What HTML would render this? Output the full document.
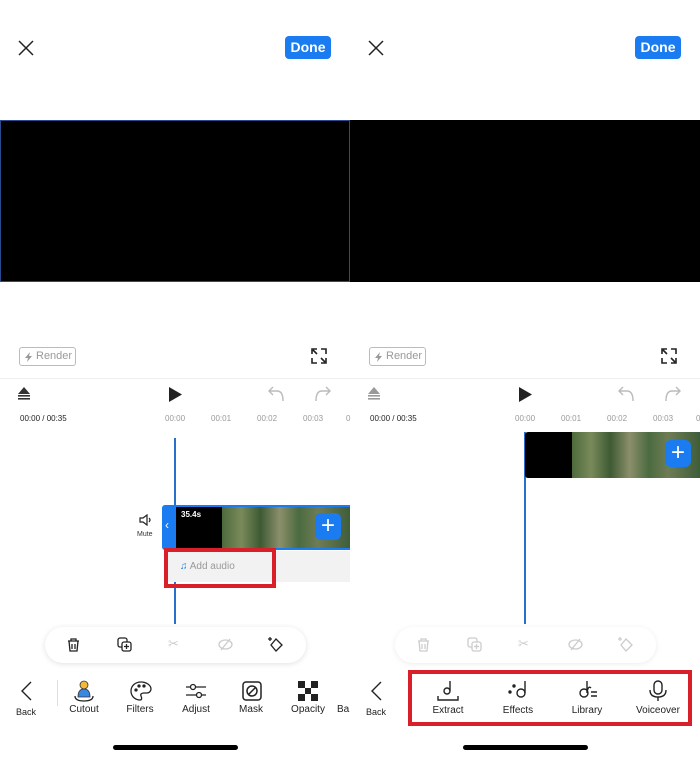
<!DOCTYPE html><html><head><style>
*{margin:0;padding:0;box-sizing:border-box}
body{width:700px;height:757px;background:#fff;font-family:"Liberation Sans",sans-serif;position:relative;overflow:hidden}
.a{position:absolute}
.t{font-size:8px;color:#999}
.lbl{font-size:10px;color:#222;text-align:center;width:70px}
.frames{background:linear-gradient(90deg,#4d6a3c,#7a8a5a 15%,#3e5a34 30%,#8b8f6a 45%,#4b6b40 60%,#6f7c55 75%,#3f5d3a)}
.rb{width:57px;height:19px;border:1px solid #bbb;border-radius:3px;font-size:11px;color:#999;line-height:17px;white-space:nowrap;padding-left:16px}
.rb svg{position:absolute;left:5px;top:4px}
</style></head><body>

<!-- LEFT PANEL -->
<svg class="a" style="left:18px;top:40px" width="16" height="16"><path d="M1 1L15 15M15 1L1 15" stroke="#222" stroke-width="1.5"/></svg>
<div class="a" style="left:285px;top:36px;width:46px;height:23px;background:#1a7cf0;border-radius:4px;color:#fff;font-weight:bold;font-size:14px;text-align:center;line-height:23px">Done</div>
<div class="a" style="left:0;top:120px;width:350px;height:162px;background:#000;border:1px solid #2a4a90"></div>
<div class="a rb" style="left:19px;top:347px"><svg width="7" height="10"><path d="M5 0L0 6H3L2 10L7 4H4Z" fill="#999"/></svg>Render</div>
<svg class="a" style="left:311px;top:348px" width="16" height="16" fill="none" stroke="#222" stroke-width="1.6"><path d="M1 6V1H6M10 1H15V6M15 10V15H10M6 15H1V10M2 2L6 6M14 14L10 10"/></svg>
<div class="a" style="left:0;top:378px;width:350px;height:1px;background:#eee"></div>
<svg class="a" style="left:17px;top:386px" width="14" height="14"><path d="M7 1L13 8H1Z" fill="#333"/><rect x="1" y="9" width="12" height="1.6" fill="#333"/><rect x="1" y="12" width="12" height="1.6" fill="#333"/></svg>
<svg class="a" style="left:169px;top:387px" width="13" height="15"><path d="M0 0L13 7.5L0 15Z" fill="#222"/></svg>
<svg class="a" style="left:268px;top:386px" width="16" height="16" fill="none" stroke="#bbb" stroke-width="1.4"><path d="M5 1L1 5L5 9M1 5H9Q15 5 15 15"/></svg>
<svg class="a" style="left:315px;top:386px" width="16" height="16" fill="none" stroke="#bbb" stroke-width="1.4"><path d="M11 1L15 5L11 9M15 5H7Q1 5 1 15"/></svg>
<div class="a" style="left:20px;top:414px;font-size:8px;color:#222">00:00 / 00:35</div>
<div class="a t" style="left:165px;top:414px">00:00</div><div class="a t" style="left:211px;top:414px">00:01</div><div class="a t" style="left:257px;top:414px">00:02</div><div class="a t" style="left:303px;top:414px">00:03</div><div class="a t" style="left:346px;top:414px">0</div>
<div class="a" style="left:174px;top:438px;width:2px;height:186px;background:#2a6fc9"></div>
<svg class="a" style="left:139px;top:514px" width="14" height="12" fill="none" stroke="#222" stroke-width="1.2"><path d="M1 4H4L8 1V11L4 8H1Z M10 4Q12 6 10 8"/></svg>
<div class="a" style="left:137px;top:531px;font-size:7px;color:#333">Mute</div>
<div class="a" style="left:162px;top:505px;width:188px;height:45px;background:#1a7cf0;border-radius:3px 0 0 3px"></div>
<div class="a" style="left:165px;top:518px;color:#fff;font-size:12px">‹</div>
<div class="a" style="left:176px;top:507px;width:46px;height:41px;background:#000;color:#fff;font-size:8px;font-weight:bold;padding:3px 5px">35.4s</div>
<div class="a frames" style="left:222px;top:507px;width:128px;height:41px"></div>
<div class="a" style="left:315px;top:513px;width:26px;height:27px;background:#1a7cf0;border-radius:6px;color:#fff;font-size:24px;text-align:center;line-height:26px">+</div>
<div class="a" style="left:168px;top:551px;width:182px;height:31px;background:#f2f2f2"></div>
<div class="a" style="left:180px;top:561px;font-size:10px;color:#999"><span style="color:#1a7cf0">♫</span> Add audio</div>
<div class="a" style="left:164px;top:548px;width:112px;height:40px;border:4px solid #d9202a"></div>
<div class="a" style="left:45px;top:627px;width:261px;height:36px;background:#fff;border-radius:18px;box-shadow:0 1px 6px rgba(0,0,0,.12)"></div>
<svg class="a" style="left:67px;top:638px" width="13" height="14" fill="none" stroke="#222" stroke-width="1.3"><path d="M1 3H12M4 3V1H9V3M2 3L3 13H10L11 3M5 6V11M8 6V11"/></svg>
<svg class="a" style="left:117px;top:637px" width="15" height="15" fill="none" stroke="#222" stroke-width="1.3"><rect x="1" y="1" width="9" height="9" rx="2"/><rect x="5" y="5" width="9" height="9" rx="2" fill="#fff"/><path d="M9.5 7V12M7 9.5H12"/></svg>
<div class="a" style="left:168px;top:636px;color:#ccc;font-size:13px">✂</div>
<svg class="a" style="left:218px;top:638px" width="15" height="13" fill="none" stroke="#ccc" stroke-width="1.3"><ellipse cx="7.5" cy="6.5" rx="6.5" ry="4.5"/><path d="M12 1L3 12"/></svg>
<svg class="a" style="left:268px;top:636px" width="17" height="16" fill="none" stroke="#222" stroke-width="1.3"><path d="M8 3L14 9L8 15L3 9Z"/><path d="M2 1V5M0 3H4"/></svg>
<svg class="a" style="left:20px;top:681px" width="12" height="20" fill="none" stroke="#222" stroke-width="1.4"><path d="M11 1L2 10L11 19"/></svg>
<div class="a" style="left:16px;top:707px;font-size:9px;color:#222">Back</div>
<div class="a" style="left:57px;top:680px;width:1px;height:26px;background:#ddd"></div>
<svg class="a" style="left:74px;top:680px" width="20" height="22"><circle cx="10" cy="5" r="4" fill="#f0b93a" stroke="#333" stroke-width=".8"/><path d="M4 17Q4 9 10 9Q16 9 16 17Z" fill="#3a86e0" stroke="#333" stroke-width=".8"/><path d="M1 16Q1 21 10 21Q19 21 19 16" fill="none" stroke="#222" stroke-width="1.3"/></svg>
<div class="a lbl" style="left:49px;top:704px">Cutout</div>
<svg class="a" style="left:130px;top:681px" width="22" height="20" fill="none" stroke="#222" stroke-width="1.3"><path d="M11 1C5 1 1 5 1 10C1 16 6 19 10 19C12 19 12 17 11 15C10 13 12 12 14 12H17C20 12 21 9 21 8C21 4 16 1 11 1Z"/><circle cx="6" cy="9" r="1" fill="#222"/><circle cx="9" cy="5" r="1" fill="#222"/><circle cx="14" cy="5" r="1" fill="#222"/></svg>
<div class="a lbl" style="left:105px;top:704px">Filters</div>
<svg class="a" style="left:185px;top:683px" width="22" height="16" fill="none" stroke="#222" stroke-width="1.3"><path d="M1 4H21M1 12H21"/><circle cx="8" cy="4" r="2.5" fill="#fff"/><circle cx="14" cy="12" r="2.5" fill="#fff"/></svg>
<div class="a lbl" style="left:161px;top:704px">Adjust</div>
<svg class="a" style="left:242px;top:681px" width="20" height="20" fill="none" stroke="#222" stroke-width="1.5"><rect x="1" y="1" width="18" height="18" rx="3"/><circle cx="10" cy="10" r="5"/><path d="M7 13L13 7"/></svg>
<div class="a lbl" style="left:216px;top:704px">Mask</div>
<svg class="a" style="left:298px;top:681px" width="20" height="20" fill="#222"><rect x="0" y="0" width="7" height="7"/><rect x="13" y="0" width="7" height="7"/><rect x="7" y="7" width="6" height="6"/><rect x="0" y="13" width="7" height="7"/><rect x="13" y="13" width="7" height="7"/></svg>
<div class="a lbl" style="left:273px;top:704px">Opacity</div>
<div class="a" style="left:337px;top:704px;font-size:10px;color:#222">Ba</div>
<div class="a" style="left:113px;top:745px;width:125px;height:5px;background:#000;border-radius:3px"></div>

<!-- RIGHT PANEL -->
<svg class="a" style="left:368px;top:40px" width="16" height="16"><path d="M1 1L15 15M15 1L1 15" stroke="#222" stroke-width="1.5"/></svg>
<div class="a" style="left:635px;top:36px;width:46px;height:23px;background:#1a7cf0;border-radius:4px;color:#fff;font-weight:bold;font-size:14px;text-align:center;line-height:23px">Done</div>
<div class="a" style="left:350px;top:120px;width:350px;height:162px;background:#000"></div>
<div class="a rb" style="left:369px;top:347px"><svg width="7" height="10"><path d="M5 0L0 6H3L2 10L7 4H4Z" fill="#999"/></svg>Render</div>
<svg class="a" style="left:661px;top:348px" width="16" height="16" fill="none" stroke="#222" stroke-width="1.6"><path d="M1 6V1H6M10 1H15V6M15 10V15H10M6 15H1V10M2 2L6 6M14 14L10 10"/></svg>
<div class="a" style="left:350px;top:378px;width:350px;height:1px;background:#eee"></div>
<svg class="a" style="left:367px;top:386px" width="14" height="14"><path d="M7 1L13 8H1Z" fill="#999"/><rect x="1" y="9" width="12" height="1.6" fill="#999"/><rect x="1" y="12" width="12" height="1.6" fill="#999"/></svg>
<svg class="a" style="left:519px;top:387px" width="13" height="15"><path d="M0 0L13 7.5L0 15Z" fill="#222"/></svg>
<svg class="a" style="left:618px;top:386px" width="16" height="16" fill="none" stroke="#bbb" stroke-width="1.4"><path d="M5 1L1 5L5 9M1 5H9Q15 5 15 15"/></svg>
<svg class="a" style="left:665px;top:386px" width="16" height="16" fill="none" stroke="#bbb" stroke-width="1.4"><path d="M11 1L15 5L11 9M15 5H7Q1 5 1 15"/></svg>
<div class="a" style="left:370px;top:414px;font-size:8px;color:#222">00:00 / 00:35</div>
<div class="a t" style="left:515px;top:414px">00:00</div><div class="a t" style="left:561px;top:414px">00:01</div><div class="a t" style="left:607px;top:414px">00:02</div><div class="a t" style="left:653px;top:414px">00:03</div><div class="a t" style="left:696px;top:414px">0</div>
<div class="a" style="left:524px;top:432px;width:2px;height:192px;background:#2a6fc9"></div>
<div class="a" style="left:525px;top:432px;width:47px;height:46px;background:#000;border-radius:3px 0 0 3px"></div>
<div class="a frames" style="left:572px;top:432px;width:128px;height:46px"></div>
<div class="a" style="left:665px;top:440px;width:26px;height:27px;background:#1a7cf0;border-radius:6px;color:#fff;font-size:24px;text-align:center;line-height:26px">+</div>
<div class="a" style="left:395px;top:627px;width:261px;height:36px;background:#fff;border-radius:18px;box-shadow:0 1px 6px rgba(0,0,0,.08)"></div>
<svg class="a" style="left:417px;top:638px" width="13" height="14" fill="none" stroke="#ccc" stroke-width="1.3"><path d="M1 3H12M4 3V1H9V3M2 3L3 13H10L11 3M5 6V11M8 6V11"/></svg>
<svg class="a" style="left:467px;top:637px" width="15" height="15" fill="none" stroke="#ccc" stroke-width="1.3"><rect x="1" y="1" width="9" height="9" rx="2"/><rect x="5" y="5" width="9" height="9" rx="2" fill="#fff"/><path d="M9.5 7V12M7 9.5H12"/></svg>
<div class="a" style="left:518px;top:636px;color:#ccc;font-size:13px">✂</div>
<svg class="a" style="left:568px;top:638px" width="15" height="13" fill="none" stroke="#ccc" stroke-width="1.3"><ellipse cx="7.5" cy="6.5" rx="6.5" ry="4.5"/><path d="M12 1L3 12"/></svg>
<svg class="a" style="left:618px;top:636px" width="17" height="16" fill="none" stroke="#ccc" stroke-width="1.3"><path d="M8 3L14 9L8 15L3 9Z"/><path d="M2 1V5M0 3H4"/></svg>
<svg class="a" style="left:370px;top:681px" width="12" height="20" fill="none" stroke="#222" stroke-width="1.4"><path d="M11 1L2 10L11 19"/></svg>
<div class="a" style="left:366px;top:707px;font-size:9px;color:#222">Back</div>
<svg class="a" style="left:437px;top:680px" width="22" height="22" fill="none" stroke="#222" stroke-width="1.4"><path d="M13 1V11"/><circle cx="10" cy="11" r="3"/><path d="M1 16V20H21V16"/></svg>
<div class="a lbl" style="left:413px;top:705px">Extract</div>
<svg class="a" style="left:508px;top:680px" width="20" height="20" fill="none" stroke="#222" stroke-width="1.4"><path d="M17 1V13"/><circle cx="13" cy="13" r="4"/><circle cx="6" cy="6" r="1" fill="#222"/><circle cx="2" cy="12" r="1" fill="#222"/></svg>
<div class="a lbl" style="left:483px;top:705px">Effects</div>
<svg class="a" style="left:578px;top:680px" width="20" height="20" fill="none" stroke="#222" stroke-width="1.4"><path d="M9 1V13Q10 5 13 8"/><circle cx="6" cy="13" r="4"/><path d="M13 12H19M13 16H19"/></svg>
<div class="a lbl" style="left:552px;top:705px">Library</div>
<svg class="a" style="left:648px;top:680px" width="20" height="22" fill="none" stroke="#222" stroke-width="1.4"><rect x="6" y="1" width="8" height="13" rx="4"/><path d="M2 10Q2 17 10 17Q18 17 18 10M10 17V21"/></svg>
<div class="a lbl" style="left:623px;top:705px">Voiceover</div>
<div class="a" style="left:408px;top:670px;width:284px;height:56px;border:4px solid #d9202a"></div>
<div class="a" style="left:463px;top:745px;width:125px;height:5px;background:#000;border-radius:3px"></div>
</body></html>
